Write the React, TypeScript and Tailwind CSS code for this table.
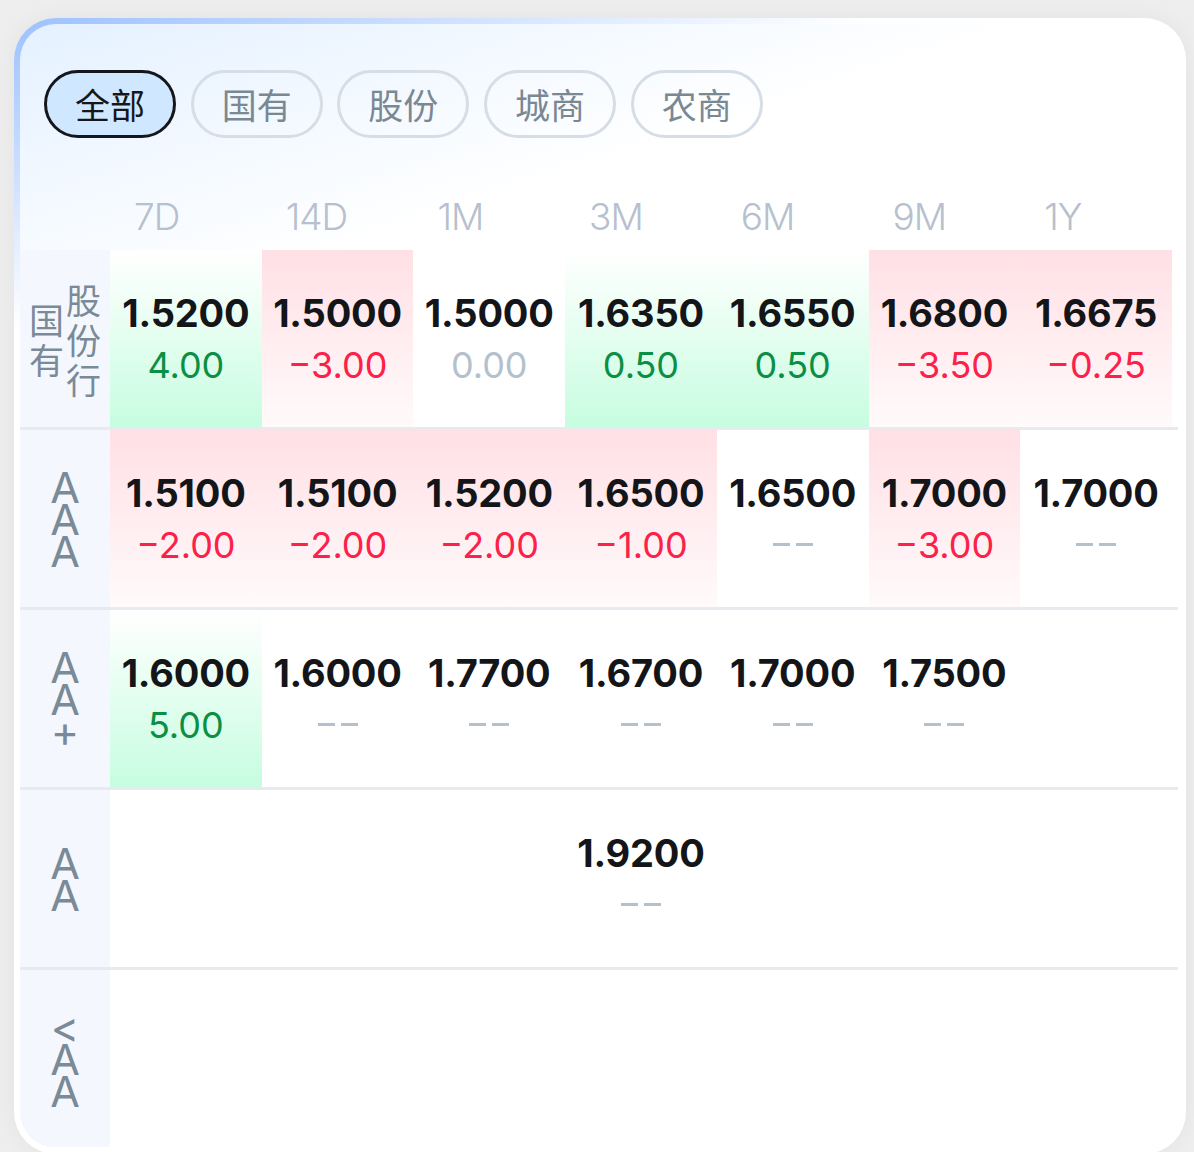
import React from "react";

type Tone = "up" | "down" | "none";

type Cell = {
  rate: string;
  change?: string; // undefined means placeholder
  tone?: Tone; // background tint
  flat?: boolean; // zero change, gray
} | null;

const tabs = ["全部", "国有", "股份", "城商", "农商"];
const terms = ["7D", "14D", "1M", "3M", "6M", "9M", "1Y"];

const rows: { label: string[][]; cells: Cell[] }[] = [
  {
    label: [["国", "有"], ["股", "份", "行"]],
    cells: [
      { rate: "1.5200", change: "4.00", tone: "up" },
      { rate: "1.5000", change: "−3.00", tone: "down" },
      { rate: "1.5000", change: "0.00", flat: true },
      { rate: "1.6350", change: "0.50", tone: "up" },
      { rate: "1.6550", change: "0.50", tone: "up" },
      { rate: "1.6800", change: "−3.50", tone: "down" },
      { rate: "1.6675", change: "−0.25", tone: "down" },
    ],
  },
  {
    label: [["A", "A", "A"]],
    cells: [
      { rate: "1.5100", change: "−2.00", tone: "down" },
      { rate: "1.5100", change: "−2.00", tone: "down" },
      { rate: "1.5200", change: "−2.00", tone: "down" },
      { rate: "1.6500", change: "−1.00", tone: "down" },
      { rate: "1.6500" },
      { rate: "1.7000", change: "−3.00", tone: "down" },
      { rate: "1.7000" },
    ],
  },
  {
    label: [["A", "A", "+"]],
    cells: [
      { rate: "1.6000", change: "5.00", tone: "up" },
      { rate: "1.6000" },
      { rate: "1.7700" },
      { rate: "1.6700" },
      { rate: "1.7000" },
      { rate: "1.7500" },
      null,
    ],
  },
  {
    label: [["A", "A"]],
    cells: [null, null, null, { rate: "1.9200" }, null, null, null],
  },
  {
    label: [["<", "A", "A"]],
    cells: [null, null, null, null, null, null, null],
  },
];

function RowLabel({ cols }: { cols: string[][] }) {
  const cjk = cols.length > 1;
  return (
    <div className="flex items-center justify-center gap-[2px] bg-[#f4f8fe] text-[#7b8a97]">
      {cols.map((col, i) => (
        <div key={i} className="flex flex-col items-center">
          {col.map((ch, j) => (
            <div
              key={j}
              className={
                cjk
                  ? "h-[40px] text-[35px] leading-[40px] font-['Noto_Sans_CJK_SC',sans-serif]"
                  : "h-[32px] text-[43px] leading-[32px] font-['Inter','Noto_Sans',sans-serif]"
              }
            >
              {ch}
            </div>
          ))}
        </div>
      ))}
    </div>
  );
}

function DataCell({ cell }: { cell: Cell }) {
  if (!cell) return <div />;
  const bg =
    cell.tone === "up"
      ? "bg-linear-to-b from-white to-[#c6fde0]"
      : cell.tone === "down"
        ? "bg-linear-to-b from-[#ffe0e5] to-[#fffafb]"
        : "";
  let changeColor = "text-[#b5c0cd]";
  if (cell.change && !cell.flat) {
    changeColor = cell.change.startsWith("−") ? "text-[#fb2149]" : "text-[#0b8f45]";
  }
  return (
    <div className={`flex flex-col items-center justify-center ${bg}`}>
      <span className="text-[38px] leading-[52px] font-bold text-[#141518] tracking-[-0.2px]">
        {cell.rate}
      </span>
      {cell.change ? (
        <span className={`text-[36px] leading-[52px] ${changeColor}`}>{cell.change}</span>
      ) : (
        <span className="flex h-[52px] items-center gap-[6px]">
          <span className="h-[3px] w-[17px] bg-[#b5c0cd]" />
          <span className="h-[3px] w-[17px] bg-[#b5c0cd]" />
        </span>
      )}
    </div>
  );
}

export default function App() {
  return (
    <div className="h-[1152px] w-[1194px] overflow-hidden bg-[#eeeeee] pl-[14px] pr-[8px] pt-[18px]">
      <div className="h-[1136px] rounded-[42px] bg-[linear-gradient(160deg,#9cc1ff_0%,#ffffff_20%)] p-[6px] shadow-[0_0_24px_rgba(0,0,0,0.05)]">
        <div className="h-full overflow-hidden rounded-[36px] bg-[linear-gradient(162deg,#e4f1ff_0%,#ffffff_22%)] font-['Inter','Noto_Sans_CJK_SC',sans-serif]">
          {/* tabs */}
          <div className="flex gap-[14.7px] pl-[24px] pt-[46px]">
            {tabs.map((t, i) => (
              <div
                key={t}
                className={
                  i === 0
                    ? "flex h-[68px] w-[132px] items-center justify-center rounded-full border-[3px] border-[#15171a] bg-[#cfe7ff] text-[35px] text-[#15171a] font-['Noto_Sans_CJK_SC',sans-serif]"
                    : "flex h-[68px] w-[132px] items-center justify-center rounded-full border-[3px] border-[#d6dde5] text-[35px] text-[#7a8894] font-['Noto_Sans_CJK_SC',sans-serif]"
                }
              >
                {t}
              </div>
            ))}
          </div>

          {/* term header */}
          <div className="mt-[46px] grid h-[66px] grid-cols-[90px_repeat(7,151.71px)] items-center">
            <div />
            {terms.map((t) => (
              <div key={t} className="pl-[24px] text-[37px] font-light text-[#b6c0ce] tracking-[-1px]">
                {t}
              </div>
            ))}
          </div>

          {/* rows */}
          {rows.map((r, ri) => (
            <div
              key={ri}
              className={
                ri < rows.length - 1
                  ? "w-[1158px] border-b-[3px] border-[#e7ebf0]"
                  : "w-[1158px]"
              }
            >
              <div className="grid h-[177px] grid-cols-[90px_repeat(7,151.71px)]">
                <RowLabel cols={r.label} />
                {r.cells.map((c, ci) => (
                  <DataCell key={ci} cell={c} />
                ))}
              </div>
            </div>
          ))}
        </div>
      </div>
    </div>
  );
}
